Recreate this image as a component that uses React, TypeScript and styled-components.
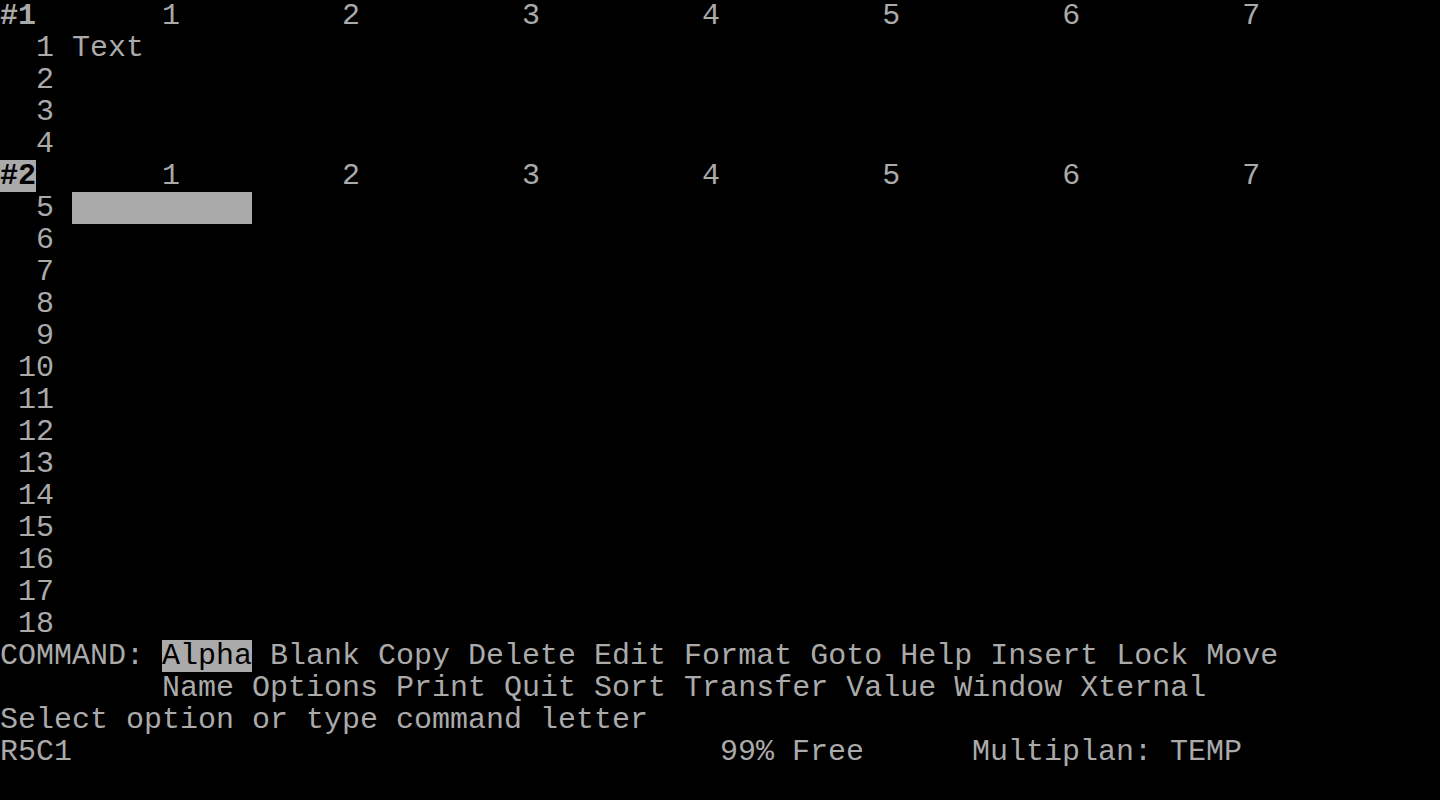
import React from 'react'
import styled, { createGlobalStyle } from 'styled-components'

const Global = createGlobalStyle`
  html, body {
    margin: 0;
    padding: 0;
    background: #000;
  }
`

const Screen = styled.div`
  width: 1440px;
  height: 800px;
  background: #000;
  color: #aaaaaa;
  font-family: 'Liberation Mono', 'DejaVu Sans Mono', monospace;
  font-size: 30px;
  overflow: hidden;
  display: flex;
  flex-direction: column;
`

const Line = styled.div`
  height: 32px;
  line-height: 32px;
  white-space: pre;
  display: flex;
`

const Cell = styled.span<{ $w: number }>`
  display: inline-block;
  width: ${(p) => p.$w * 18}px;
  overflow: hidden;
`

const Inverse = styled.span<{ $w?: number }>`
  display: inline-block;
  background: #aaaaaa;
  color: #000;
  ${(p) => (p.$w ? `width: ${p.$w * 18}px;` : '')}
`

const Strong = styled.span`
  font-weight: bold;
`

const lpad = (s: string, n: number) => ' '.repeat(Math.max(0, n - s.length)) + s

// window id takes 2 columns, column "1" sits at column 9, then every 10
const colHeads = () => {
  let s = ''
  for (let i = 1; i <= 7; i++) s += lpad(String(i), 10)
  return s.slice(2)
}

const RowNum = ({ n }: { n: number }) => <Cell $w={4}>{lpad(String(n), 3)}</Cell>

const Header = ({ id, active }: { id: string, active?: boolean }) => (
  <Line>
    {active ? <Inverse><Strong>{id}</Strong></Inverse> : <Strong>{id}</Strong>}
    <span>{colHeads()}</span>
  </Line>
)

export default function App (): React.JSX.Element {
  const lower = Array.from({ length: 13 }, (_, i) => i + 6)
  return (
    <>
      <Global />
      <Screen>
        <Header id="#1" />
        <Line><RowNum n={1} /><span>Text</span></Line>
        <Line><RowNum n={2} /></Line>
        <Line><RowNum n={3} /></Line>
        <Line><RowNum n={4} /></Line>
        <Header id="#2" active />
        <Line><RowNum n={5} /><Inverse $w={10}> </Inverse></Line>
        {lower.map((n) => (
          <Line key={n}><RowNum n={n} /></Line>
        ))}
        <Line>
          <span>COMMAND: </span>
          <Inverse>Alpha</Inverse>
          <span> Blank Copy Delete Edit Format Goto Help Insert Lock Move</span>
        </Line>
        <Line>
          <span>{'         '}Name Options Print Quit Sort Transfer Value Window Xternal</span>
        </Line>
        <Line>Select option or type command letter</Line>
        <Line>
          <Cell $w={40}>R5C1</Cell>
          <Cell $w={14}>99% Free</Cell>
          <span>Multiplan: TEMP</span>
        </Line>
        <Line />
      </Screen>
    </>
  )
}
